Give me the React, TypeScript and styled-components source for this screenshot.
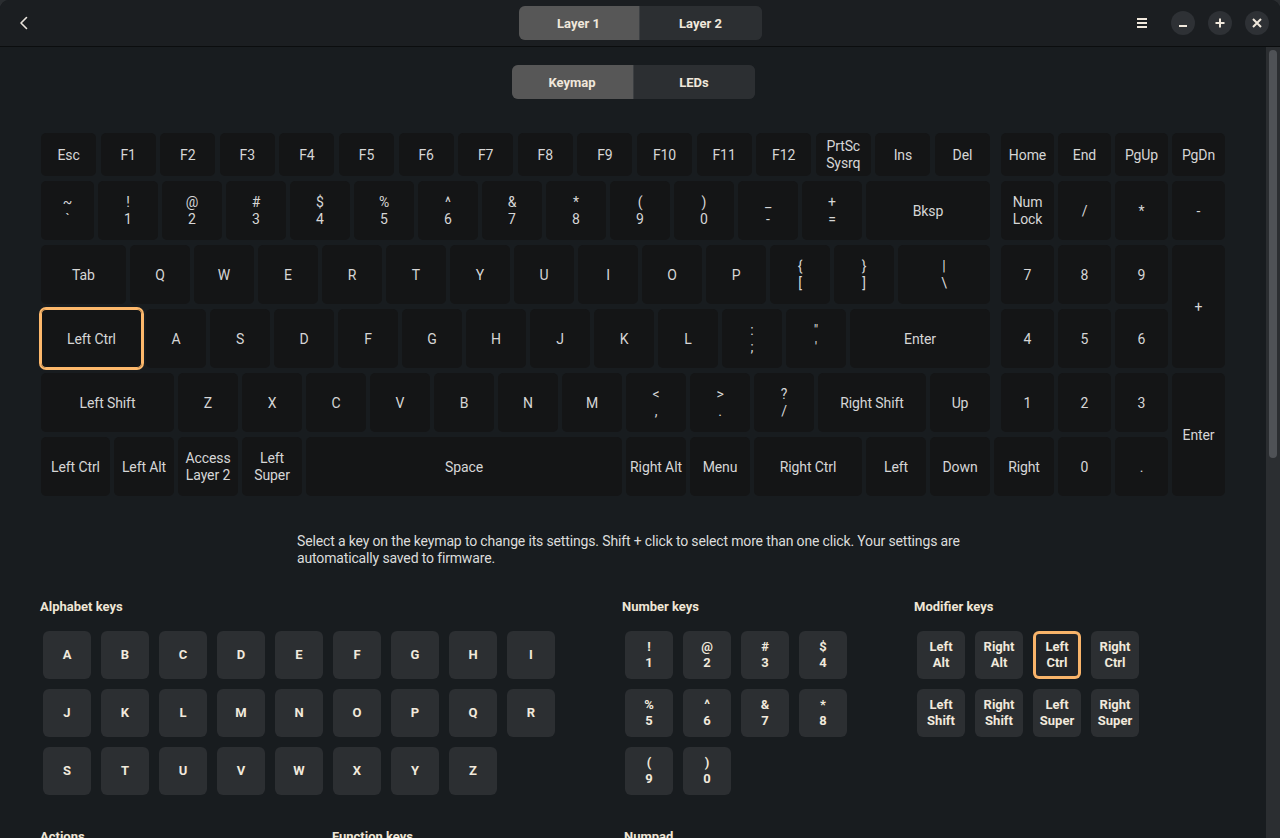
import React from 'react';
import styled, { createGlobalStyle, css } from 'styled-components';

type KeyDef = { label: string; w?: number; selected?: boolean };

const fRow: KeyDef[] = [
  'Esc', 'F1', 'F2', 'F3', 'F4', 'F5', 'F6', 'F7', 'F8', 'F9', 'F10', 'F11', 'F12',
  'PrtSc\nSysrq', 'Ins', 'Del',
].map((label) => ({ label }));

const numberRow: KeyDef[] = [
  { label: '~\n`', w: 53 },
  ...['!\n1', '@\n2', '#\n3', '$\n4', '%\n5', '^\n6', '&\n7', '*\n8', '(\n9', ')\n0', '_\n-', '+\n='].map(
    (label) => ({ label, w: 60 })
  ),
  { label: 'Bksp', w: 124 },
];

const tabRow: KeyDef[] = [
  { label: 'Tab', w: 85 },
  ...['Q', 'W', 'E', 'R', 'T', 'Y', 'U', 'I', 'O', 'P', '{\n[', '}\n]'].map((label) => ({ label, w: 60 })),
  { label: '|\n\\', w: 92 },
];

const ctrlRow: KeyDef[] = [
  { label: 'Left Ctrl', w: 101, selected: true },
  ...['A', 'S', 'D', 'F', 'G', 'H', 'J', 'K', 'L', ':\n;', '"\n\''].map((label) => ({ label, w: 60 })),
  { label: 'Enter', w: 140 },
];

const shiftRow: KeyDef[] = [
  { label: 'Left Shift', w: 133 },
  ...['Z', 'X', 'C', 'V', 'B', 'N', 'M', '<\n,', '>\n.', '?\n/'].map((label) => ({ label, w: 60 })),
  { label: 'Right Shift', w: 108 },
  { label: 'Up', w: 60 },
];

const bottomRow: KeyDef[] = [
  { label: 'Left Ctrl', w: 69 },
  { label: 'Left Alt', w: 60 },
  { label: 'Access\nLayer 2', w: 60 },
  { label: 'Left\nSuper', w: 60 },
  { label: 'Space', w: 316 },
  { label: 'Right Alt', w: 60 },
  { label: 'Menu', w: 60 },
  { label: 'Right Ctrl', w: 108 },
  { label: 'Left', w: 60 },
  { label: 'Down', w: 60 },
];

const mainRows: { h: number; keys: KeyDef[] }[] = [
  { h: 43, keys: fRow },
  { h: 59, keys: numberRow },
  { h: 59, keys: tabRow },
  { h: 59, keys: ctrlRow },
  { h: 59, keys: shiftRow },
  { h: 59, keys: bottomRow },
];

const numpad: { label: string; span?: number; wide?: boolean }[] = [
  { label: 'Home' }, { label: 'End' }, { label: 'PgUp' }, { label: 'PgDn' },
  { label: 'Num\nLock' }, { label: '/' }, { label: '*' }, { label: '-' },
  { label: '7' }, { label: '8' }, { label: '9' }, { label: '+', span: 2 },
  { label: '4' }, { label: '5' }, { label: '6' },
  { label: '1' }, { label: '2' }, { label: '3' }, { label: 'Enter', span: 2 },
  { label: 'Right', wide: true }, { label: '0' }, { label: '.' },
];

const sections: { title: string; cols: number; keys: string[]; selected?: string }[] = [
  { title: 'Alphabet keys', cols: 9, keys: 'ABCDEFGHIJKLMNOPQRSTUVWXYZ'.split('') },
  { title: 'Number keys', cols: 4, keys: ['!\n1', '@\n2', '#\n3', '$\n4', '%\n5', '^\n6', '&\n7', '*\n8', '(\n9', ')\n0'] },
  {
    title: 'Modifier keys',
    cols: 4,
    keys: ['Left\nAlt', 'Right\nAlt', 'Left\nCtrl', 'Right\nCtrl', 'Left\nShift', 'Right\nShift', 'Left\nSuper', 'Right\nSuper'],
    selected: 'Left\nCtrl',
  },
  { title: 'Actions', cols: 4, keys: ['Layer\n1', 'Layer\n2', 'Access\nLayer 1', 'Access\nLayer 2', 'Roll\nover', 'Reset'] },
  { title: 'Function keys', cols: 4, keys: ['F1', 'F2', 'F3', 'F4', 'F5', 'F6', 'F7', 'F8', 'F9', 'F10', 'F11', 'F12'] },
  { title: 'Numpad', cols: 4, keys: ['7', '8', '9', '+', '4', '5', '6', '-', '1', '2', '3', '*', '0', '.', '/', 'Enter'] },
  { title: 'Media keys', cols: 8, keys: ['Play', 'Pause', 'Next', 'Prev', 'Mute', 'Vol +', 'Vol -', 'Eject'] },
];

function App(): JSX.Element {
  return (
    <>
      <GlobalStyle />
      <Window>
        <HeaderBar>
          <HeaderLeft>
            <BackButton aria-label="Back">
              <svg width="16" height="16" viewBox="0 0 16 16">
                <path d="M10.5 2.5 L5 8 L10.5 13.5" fill="none" stroke="#e9e4dc" strokeWidth="1.6" strokeLinecap="round" strokeLinejoin="round" />
              </svg>
            </BackButton>
          </HeaderLeft>
          <Segmented>
            <SegButton $active $w={120}>Layer 1</SegButton>
            <SegButton $w={123}>Layer 2</SegButton>
          </Segmented>
          <HeaderRight>
            <MenuButton aria-label="Menu">
              <svg width="12" height="12" viewBox="0 0 12 12">
                <path d="M1 2h10M1 6h10M1 10h10" stroke="#f0e8dc" strokeWidth="1.8" />
              </svg>
            </MenuButton>
            <CircleButton aria-label="Minimize">
              <svg width="10" height="10" viewBox="0 0 10 10">
                <path d="M1 8h8" stroke="#f0e8dc" strokeWidth="2" />
              </svg>
            </CircleButton>
            <CircleButton aria-label="Maximize">
              <svg width="10" height="10" viewBox="0 0 10 10">
                <path d="M5 0.5v9M0.5 5h9" stroke="#f0e8dc" strokeWidth="2" />
              </svg>
            </CircleButton>
            <CircleButton aria-label="Close">
              <svg width="10" height="10" viewBox="0 0 10 10">
                <path d="M1 1l8 8M9 1l-8 8" stroke="#f0e8dc" strokeWidth="2" />
              </svg>
            </CircleButton>
          </HeaderRight>
        </HeaderBar>

        <Body>
          <Scroller>
            <Content>
              <TabsRow>
                <Segmented>
                  <SegButton $active $w={121}>Keymap</SegButton>
                  <SegButton $w={122}>LEDs</SegButton>
                </Segmented>
              </TabsRow>

              <Keyboard>
                <MainBlock>
                  {mainRows.map((row, ri) => (
                    <KeyRow key={`row_${ri}`} $h={row.h} $gap={ri === 0 ? 4.5 : 4}>
                      {row.keys.map((k, ki) => (
                        <KeyCap key={`${ri}_${ki}`} $w={k.w} $selected={k.selected}>
                          {k.label}
                        </KeyCap>
                      ))}
                    </KeyRow>
                  ))}
                </MainBlock>
                <NumBlock>
                  {numpad.map((k, i) => (
                    <KeyCap key={`np_${i}`} $span={k.span} $wide={k.wide}>
                      {k.label}
                    </KeyCap>
                  ))}
                </NumBlock>
              </Keyboard>

              <Description>
                Select a key on the keymap to change its settings. Shift + click to select more than one click. Your
                settings are automatically saved to firmware.
              </Description>

              <Sections>
                {sections.map((s) => (
                  <Section key={s.title}>
                    <SectionTitle>{s.title}</SectionTitle>
                    <PadGrid $cols={s.cols}>
                      {s.keys.map((k) => (
                        <PadKey key={k} $selected={k === s.selected}>
                          {k}
                        </PadKey>
                      ))}
                    </PadGrid>
                  </Section>
                ))}
              </Sections>
            </Content>
          </Scroller>
          <ScrollTrack>
            <ScrollThumb />
          </ScrollTrack>
        </Body>
      </Window>
    </>
  );
}

export default App;

const GlobalStyle = createGlobalStyle`
  * { box-sizing: border-box; }
  html, body {
    margin: 0;
    padding: 0;
    background: #2a2d30;
  }
  body {
    font-family: Roboto, "Noto Sans", "Liberation Sans", sans-serif;
    color: #d8d8d8;
  }
`;

const Window = styled.div`
  height: 100vh;
  display: flex;
  flex-direction: column;
  background: #181c1f;
  border-radius: 9px 9px 0 0;
  overflow: hidden;
`;

const HeaderBar = styled.header`
  flex: none;
  height: 47px;
  display: grid;
  grid-template-columns: 1fr auto 1fr;
  align-items: center;
  padding: 0 11px;
  background: #1b1e21;
  border-bottom: 1px solid #0b0d0e;
`;

const HeaderLeft = styled.div`
  display: flex;
  align-items: center;
  padding-left: 3px;
`;

const HeaderRight = styled.div`
  display: flex;
  align-items: center;
  justify-content: flex-end;
  gap: 13px;
`;

const BackButton = styled.button`
  width: 20px;
  height: 20px;
  padding: 0;
  border: 0;
  background: transparent;
  display: flex;
  align-items: center;
  justify-content: center;
`;

const MenuButton = styled.button`
  width: 24px;
  height: 24px;
  margin-right: 4px;
  padding: 0;
  border: 0;
  background: transparent;
  display: flex;
  align-items: center;
  justify-content: center;
`;

const CircleButton = styled.button`
  width: 24px;
  height: 24px;
  padding: 0;
  border: 0;
  border-radius: 50%;
  background: #2e3135;
  display: flex;
  align-items: center;
  justify-content: center;
`;

const Segmented = styled.div`
  display: flex;
  height: 34px;
  border-radius: 6px;
  overflow: hidden;
  background: #2c2f32;
`;

const SegButton = styled.button<{ $active?: boolean; $w: number }>`
  width: ${(p) => p.$w}px;
  height: 100%;
  border: 0;
  padding: 0;
  font-family: inherit;
  font-size: 13px;
  font-weight: 700;
  color: #f0e8dc;
  background: ${(p) => (p.$active ? '#575757' : '#2c2f32')};
  & + & {
    border-left: 1px solid #3c3f42;
  }
`;

const Body = styled.div`
  flex: 1;
  min-height: 0;
  display: flex;
`;

const Scroller = styled.main`
  flex: 1;
  min-width: 0;
  overflow-y: auto;
  scrollbar-width: none;
  &::-webkit-scrollbar {
    display: none;
  }
`;

const ScrollTrack = styled.div`
  flex: 0 0 14px;
  background: #2b2e31;
  padding: 3px 3px 0;
`;

const ScrollThumb = styled.div`
  height: 408px;
  border-radius: 4px;
  background: #4f5256;
`;

const Content = styled.div`
  min-height: 1533px;
  padding-top: 18px;
`;

const TabsRow = styled.div`
  display: flex;
  justify-content: center;
`;

const Keyboard = styled.div`
  width: 1184px;
  margin: 34px auto 0;
  display: flex;
  gap: 11px;
`;

const MainBlock = styled.div`
  width: 949px;
  display: flex;
  flex-direction: column;
  gap: 5px;
`;

const KeyRow = styled.div<{ $h: number; $gap: number }>`
  height: ${(p) => p.$h}px;
  display: flex;
  gap: ${(p) => p.$gap}px;
`;

const NumBlock = styled.div`
  display: grid;
  grid-template-columns: repeat(4, 53px);
  grid-template-rows: 43px repeat(5, 59px);
  column-gap: 4px;
  row-gap: 5px;
`;

const KeyCap = styled.div<{ $w?: number; $selected?: boolean; $span?: number; $wide?: boolean }>`
  flex: ${(p) => (p.$w ? `0 0 ${p.$w}px` : '1 1 0')};
  min-width: 0;
  display: flex;
  align-items: center;
  justify-content: center;
  text-align: center;
  white-space: pre-line;
  padding-top: 1px;
  background: #141516;
  border-radius: 5px;
  font-size: 14px;
  line-height: 17px;
  letter-spacing: -0.1px;
  color: #d6d6d6;
  ${(p) => p.$span && css`grid-row: span ${p.$span};`}
  ${(p) => p.$wide && css`margin-left: -7px;`}
  ${(p) =>
    p.$selected &&
    css`
      box-shadow: 0 0 0 2px #fdb86b, inset 0 0 0 1px #fdb86b;
    `}
`;

const Description = styled.p`
  width: 672px;
  margin: 37px auto 0;
  font-size: 14px;
  line-height: 17px;
  letter-spacing: -0.15px;
  color: #dcdcdc;
`;

const Sections = styled.div`
  display: flex;
  flex-wrap: wrap;
  column-gap: 60px;
  row-gap: 33px;
  margin-top: 31px;
  padding: 0 40px 40px;
`;

const Section = styled.section`
  display: flex;
  flex-direction: column;
`;

const SectionTitle = styled.h3`
  margin: 0 0 15px;
  font-size: 13px;
  line-height: 18px;
  font-weight: 700;
  color: #efe6d6;
`;

const PadGrid = styled.div<{ $cols: number }>`
  display: grid;
  grid-template-columns: repeat(${(p) => p.$cols}, 48px);
  grid-auto-rows: 48px;
  gap: 10px;
  padding: 0 7px 0 3px;
`;

const PadKey = styled.div<{ $selected?: boolean }>`
  display: flex;
  align-items: center;
  justify-content: center;
  text-align: center;
  white-space: pre-line;
  border-radius: 6px;
  background: ${(p) => (p.$selected ? '#232528' : '#2c2f32')};
  font-size: 13px;
  line-height: 16px;
  font-weight: 700;
  color: #f1e9dc;
  ${(p) =>
    p.$selected &&
    css`
      box-shadow: inset 0 0 0 3px #f9b46a;
    `}
`;
